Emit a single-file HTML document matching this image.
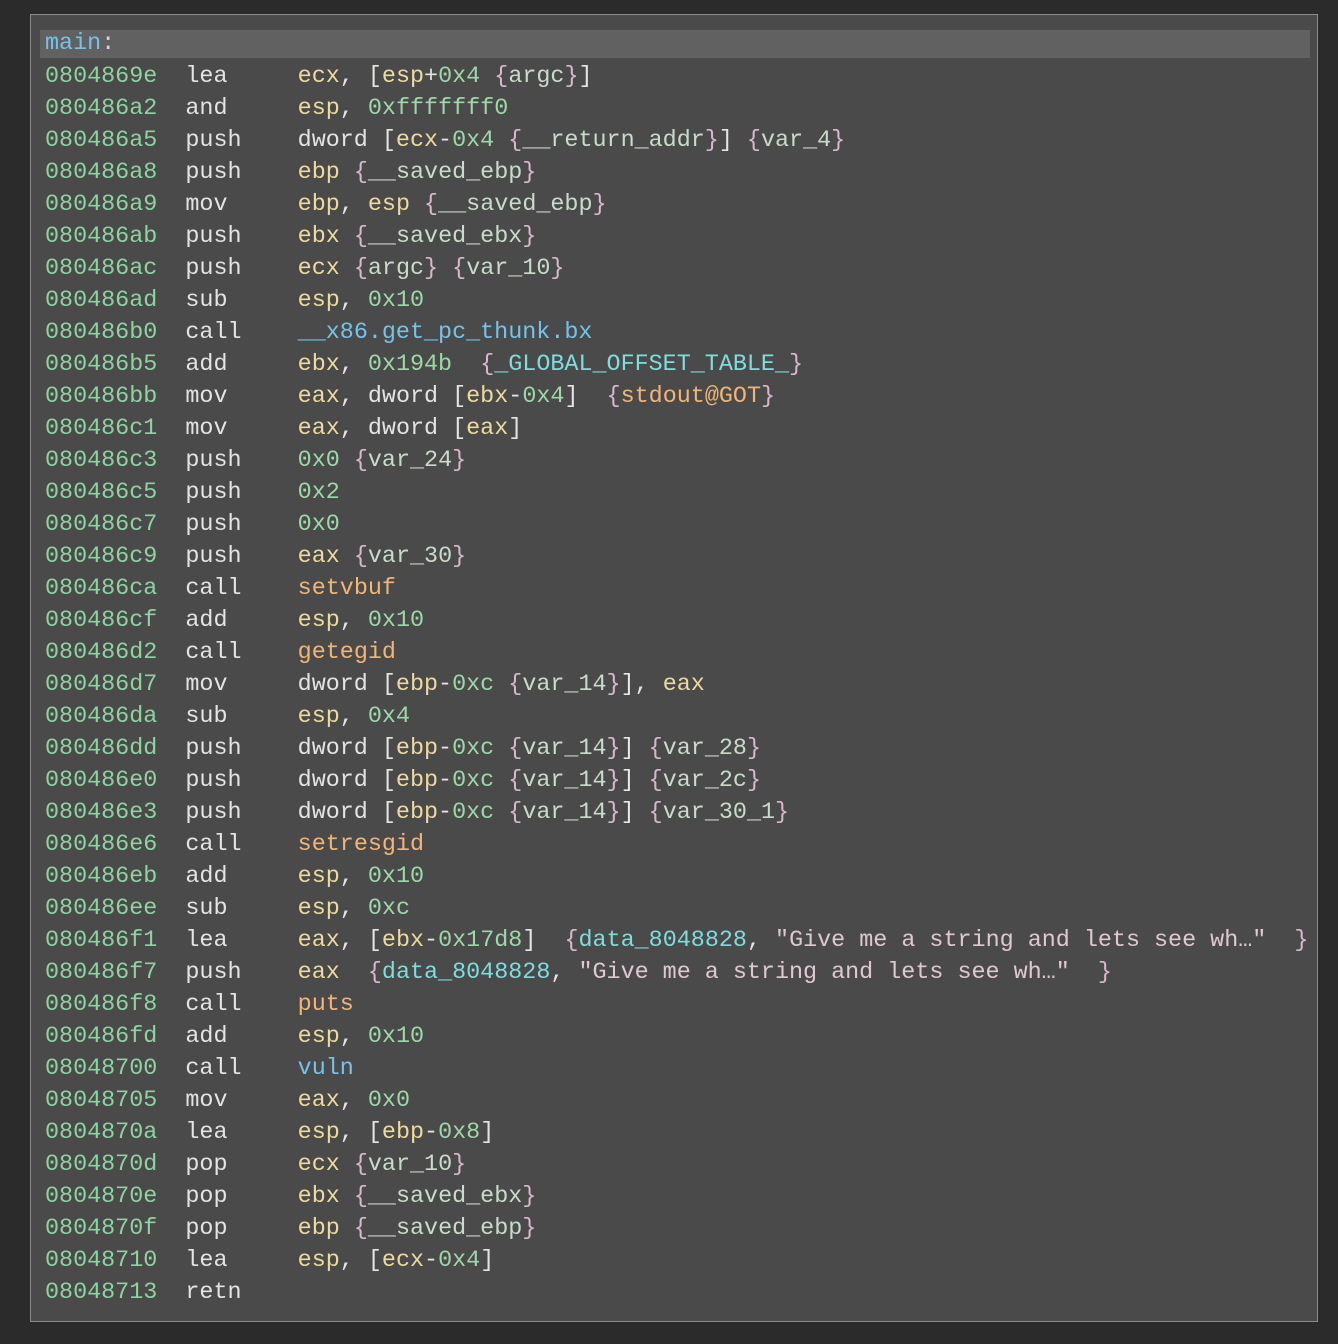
<!DOCTYPE html>
<html><head><meta charset="utf-8"><style>
html,body{margin:0;padding:0;}
body{width:1338px;height:1344px;background:#2b2b2b;position:relative;overflow:hidden;font-family:"Liberation Mono",monospace;font-size:23.4px;}
#panel{position:absolute;left:30px;top:14px;width:1286px;height:1306px;background:#4a4a4a;border:1px solid #8c8c8c;}
#hdr{position:absolute;left:9px;top:15px;width:1270px;height:28px;background:#616161;line-height:28px;padding-left:5px;box-sizing:border-box;}
#code{position:absolute;left:14px;top:46px;white-space:pre;line-height:32px;color:#e4e4e4;}
.a{color:#8fd3a0}.r{color:#eed9a0}.n{color:#9ed8a8}.b{color:#d9b8cc}.v{color:#c9dccb}.d{color:#7fdddd}.s{color:#e0c8d2}.f{color:#f2b577}.l{color:#76c3ea}.p{color:#d6d6d6}
</style></head><body>
<div id="panel">
<div id="hdr"><span class="l">main</span><span class="p">:</span></div>
<div id="code"><span class="a">0804869e</span>  lea     <span class="r">ecx</span>, [<span class="r">esp</span>+<span class="n">0x4</span> <span class="b">{</span><span class="v">argc</span><span class="b">}</span>]
<span class="a">080486a2</span>  and     <span class="r">esp</span>, <span class="n">0xfffffff0</span>
<span class="a">080486a5</span>  push    dword [<span class="r">ecx</span>-<span class="n">0x4</span> <span class="b">{</span><span class="v">__return_addr</span><span class="b">}</span>] <span class="b">{</span><span class="v">var_4</span><span class="b">}</span>
<span class="a">080486a8</span>  push    <span class="r">ebp</span> <span class="b">{</span><span class="v">__saved_ebp</span><span class="b">}</span>
<span class="a">080486a9</span>  mov     <span class="r">ebp</span>, <span class="r">esp</span> <span class="b">{</span><span class="v">__saved_ebp</span><span class="b">}</span>
<span class="a">080486ab</span>  push    <span class="r">ebx</span> <span class="b">{</span><span class="v">__saved_ebx</span><span class="b">}</span>
<span class="a">080486ac</span>  push    <span class="r">ecx</span> <span class="b">{</span><span class="v">argc</span><span class="b">}</span> <span class="b">{</span><span class="v">var_10</span><span class="b">}</span>
<span class="a">080486ad</span>  sub     <span class="r">esp</span>, <span class="n">0x10</span>
<span class="a">080486b0</span>  call    <span class="l">__x86.get_pc_thunk.bx</span>
<span class="a">080486b5</span>  add     <span class="r">ebx</span>, <span class="n">0x194b</span>  <span class="b">{</span><span class="d">_GLOBAL_OFFSET_TABLE_</span><span class="b">}</span>
<span class="a">080486bb</span>  mov     <span class="r">eax</span>, dword [<span class="r">ebx</span>-<span class="n">0x4</span>]  <span class="b">{</span><span class="f">stdout@GOT</span><span class="b">}</span>
<span class="a">080486c1</span>  mov     <span class="r">eax</span>, dword [<span class="r">eax</span>]
<span class="a">080486c3</span>  push    <span class="n">0x0</span> <span class="b">{</span><span class="v">var_24</span><span class="b">}</span>
<span class="a">080486c5</span>  push    <span class="n">0x2</span>
<span class="a">080486c7</span>  push    <span class="n">0x0</span>
<span class="a">080486c9</span>  push    <span class="r">eax</span> <span class="b">{</span><span class="v">var_30</span><span class="b">}</span>
<span class="a">080486ca</span>  call    <span class="f">setvbuf</span>
<span class="a">080486cf</span>  add     <span class="r">esp</span>, <span class="n">0x10</span>
<span class="a">080486d2</span>  call    <span class="f">getegid</span>
<span class="a">080486d7</span>  mov     dword [<span class="r">ebp</span>-<span class="n">0xc</span> <span class="b">{</span><span class="v">var_14</span><span class="b">}</span>], <span class="r">eax</span>
<span class="a">080486da</span>  sub     <span class="r">esp</span>, <span class="n">0x4</span>
<span class="a">080486dd</span>  push    dword [<span class="r">ebp</span>-<span class="n">0xc</span> <span class="b">{</span><span class="v">var_14</span><span class="b">}</span>] <span class="b">{</span><span class="v">var_28</span><span class="b">}</span>
<span class="a">080486e0</span>  push    dword [<span class="r">ebp</span>-<span class="n">0xc</span> <span class="b">{</span><span class="v">var_14</span><span class="b">}</span>] <span class="b">{</span><span class="v">var_2c</span><span class="b">}</span>
<span class="a">080486e3</span>  push    dword [<span class="r">ebp</span>-<span class="n">0xc</span> <span class="b">{</span><span class="v">var_14</span><span class="b">}</span>] <span class="b">{</span><span class="v">var_30_1</span><span class="b">}</span>
<span class="a">080486e6</span>  call    <span class="f">setresgid</span>
<span class="a">080486eb</span>  add     <span class="r">esp</span>, <span class="n">0x10</span>
<span class="a">080486ee</span>  sub     <span class="r">esp</span>, <span class="n">0xc</span>
<span class="a">080486f1</span>  lea     <span class="r">eax</span>, [<span class="r">ebx</span>-<span class="n">0x17d8</span>]  <span class="b">{</span><span class="d">data_8048828</span>, <span class="s">"Give me a string and lets see wh…"</span>  <span class="b">}</span>
<span class="a">080486f7</span>  push    <span class="r">eax</span>  <span class="b">{</span><span class="d">data_8048828</span>, <span class="s">"Give me a string and lets see wh…"</span>  <span class="b">}</span>
<span class="a">080486f8</span>  call    <span class="f">puts</span>
<span class="a">080486fd</span>  add     <span class="r">esp</span>, <span class="n">0x10</span>
<span class="a">08048700</span>  call    <span class="l">vuln</span>
<span class="a">08048705</span>  mov     <span class="r">eax</span>, <span class="n">0x0</span>
<span class="a">0804870a</span>  lea     <span class="r">esp</span>, [<span class="r">ebp</span>-<span class="n">0x8</span>]
<span class="a">0804870d</span>  pop     <span class="r">ecx</span> <span class="b">{</span><span class="v">var_10</span><span class="b">}</span>
<span class="a">0804870e</span>  pop     <span class="r">ebx</span> <span class="b">{</span><span class="v">__saved_ebx</span><span class="b">}</span>
<span class="a">0804870f</span>  pop     <span class="r">ebp</span> <span class="b">{</span><span class="v">__saved_ebp</span><span class="b">}</span>
<span class="a">08048710</span>  lea     <span class="r">esp</span>, [<span class="r">ecx</span>-<span class="n">0x4</span>]
<span class="a">08048713</span>  retn</div>
</div>
</body></html>
